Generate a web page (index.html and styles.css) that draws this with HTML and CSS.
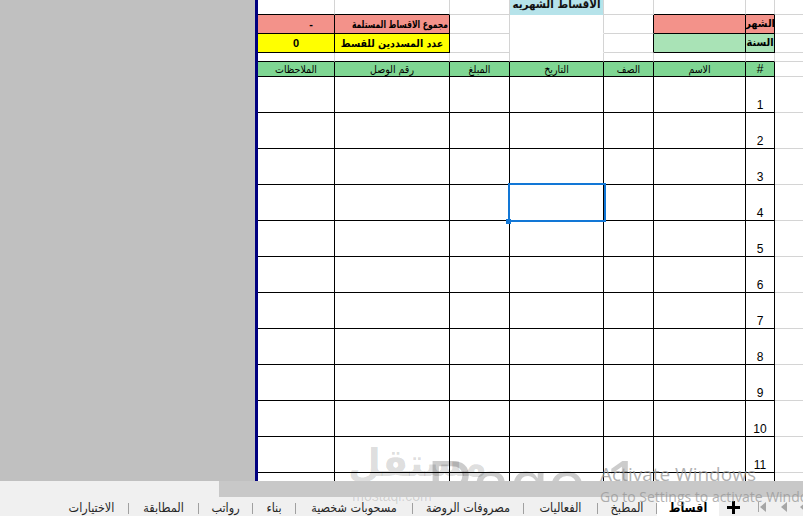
FILE: index.html
```html
<!DOCTYPE html>
<html lang="ar">
<head>
<meta charset="utf-8">
<title>اقساط</title>
<link rel="stylesheet" href="styles.css">
</head>
<body>
<div class="app">
  <div class="main">
    <div class="pane"></div>
    <div class="sheet">
      <table class="grid">
        <colgroup>
          <col class="c1"><col class="c2"><col class="c3"><col class="c4"><col class="c5"><col class="c6"><col class="c7"><col class="c8">
        </colgroup>
        <tr class="r0">
          <td class="bb"></td>
          <td class="bb"></td>
          <td></td>
          <td class="title nob"><div class="title-in">الاقساط الشهريه</div></td>
          <td></td>
          <td class="bb"></td>
          <td class="bb"></td>
          <td></td>
        </tr>
        <tr class="r1">
          <td class="box pink val dash">-</td>
          <td class="box pink lbl"><span class="squeeze">مجموع الاقساط المستلمة</span></td>
          <td></td>
          <td class="nob"></td>
          <td class="br"></td>
          <td class="box pink"></td>
          <td class="box pink side">الشهر</td>
          <td></td>
        </tr>
        <tr class="r2">
          <td class="box yellow val">0</td>
          <td class="box yellow lbl mid">عدد المسددين للقسط</td>
          <td></td>
          <td class="nob"></td>
          <td class="br"></td>
          <td class="box lgreen"></td>
          <td class="box lgreen side">السنة</td>
          <td></td>
        </tr>
        <tr class="r3">
          <td class="bb"></td><td class="bb"></td><td class="bb"></td><td class="bb"></td><td class="bb"></td><td class="bb"></td><td class="bb"></td><td></td>
        </tr>
        <tr class="r4">
          <td class="box head">الملاحظات</td>
          <td class="box head">رقم الوصل</td>
          <td class="box head">المبلغ</td>
          <td class="box head">التاريخ</td>
          <td class="box head">الصف</td>
          <td class="box head">الاسم</td>
          <td class="box head hash">#</td>
          <td></td>
        </tr>
        <tr class="rd"><td class="box"></td><td class="box"></td><td class="box"></td><td class="box"></td><td class="box"></td><td class="box"></td><td class="box num">1</td><td></td></tr>
        <tr class="rd"><td class="box"></td><td class="box"></td><td class="box"></td><td class="box"></td><td class="box"></td><td class="box"></td><td class="box num">2</td><td></td></tr>
        <tr class="rd"><td class="box"></td><td class="box"></td><td class="box"></td><td class="box"></td><td class="box"></td><td class="box"></td><td class="box num">3</td><td></td></tr>
        <tr class="rd"><td class="box"></td><td class="box"></td><td class="box"></td><td class="box selcell"><div class="sel"></div><div class="handle"></div></td><td class="box"></td><td class="box"></td><td class="box num">4</td><td></td></tr>
        <tr class="rd"><td class="box"></td><td class="box"></td><td class="box"></td><td class="box"></td><td class="box"></td><td class="box"></td><td class="box num">5</td><td></td></tr>
        <tr class="rd"><td class="box"></td><td class="box"></td><td class="box"></td><td class="box"></td><td class="box"></td><td class="box"></td><td class="box num">6</td><td></td></tr>
        <tr class="rd"><td class="box"></td><td class="box"></td><td class="box"></td><td class="box"></td><td class="box"></td><td class="box"></td><td class="box num">7</td><td></td></tr>
        <tr class="rd"><td class="box"></td><td class="box"></td><td class="box"></td><td class="box"></td><td class="box"></td><td class="box"></td><td class="box num">8</td><td></td></tr>
        <tr class="rd"><td class="box"></td><td class="box"></td><td class="box"></td><td class="box"></td><td class="box"></td><td class="box"></td><td class="box num">9</td><td></td></tr>
        <tr class="rd"><td class="box"></td><td class="box"></td><td class="box"></td><td class="box"></td><td class="box"></td><td class="box"></td><td class="box num">10</td><td></td></tr>
        <tr class="rd"><td class="box"></td><td class="box"></td><td class="box"></td><td class="box"></td><td class="box"></td><td class="box"></td><td class="box num">11</td><td></td></tr>
        <tr class="rd"><td class="box"></td><td class="box"></td><td class="box"></td><td class="box"></td><td class="box"></td><td class="box"></td><td class="box num">12</td><td></td></tr>
      </table>
      <div class="page-mark"><div class="page-text">Page 1</div></div>
    </div>
  </div>
  <div class="hscroll"><div class="hs-left"></div><div class="hs-bar"></div></div>
  <div class="tabs">
    <div class="tab-spacer"></div>
    <div class="tab w73">الاختيارات</div><span class="sep"></span>
    <div class="tab w69">المطابقة</div><span class="sep"></span>
    <div class="tab w53">رواتب</div><span class="sep"></span>
    <div class="tab w42">بناء</div><span class="sep"></span>
    <div class="tab w116">مسحوبات شخصية</div><span class="sep"></span>
    <div class="tab w110">مصروفات الروضة</div><span class="sep"></span>
    <div class="tab w73">الفعاليات</div><span class="sep"></span>
    <div class="tab w58">المطبخ</div><span class="sep"></span>
    <div class="tab active">اقساط</div>
    <div class="plus">
      <svg width="13" height="13" viewBox="0 0 13 13"><rect x="5" y="0" width="3" height="13" fill="#000"/><rect x="0" y="5" width="13" height="3" fill="#000"/></svg>
    </div>
    <div class="nav">
      <svg width="58" height="12" viewBox="0 0 58 12">
        <rect x="12" y="1" width="1" height="10" fill="#a6a6a6"/>
        <polygon points="14,6 20,1 20,11" fill="#a6a6a6"/>
        <polygon points="35,6 41,1 41,11" fill="#a6a6a6"/>
        <polygon points="54,6 58,2.5 58,9.5" fill="#a6a6a6"/>
      </svg>
    </div>
  </div>
  <div class="logo-mark">
    <div class="logo-ar">مستقل</div>
    <div class="logo-en">mostaql.com</div>
  </div>
  <div class="activate">
    <div class="act1">Activate Windows</div>
    <div class="act2">Go to Settings to activate Windows.</div>
  </div>
</div>
</body>
</html>
```
FILE: styles.css
```css
* { box-sizing: border-box; }
html, body { margin: 0; padding: 0; }
body {
  width: 803px;
  height: 516px;
  overflow: hidden;
  background: #f0f0f0;
  font-family: "Liberation Sans", "DejaVu Sans", sans-serif;
}
.app { position: relative; width: 803px; height: 516px; overflow: hidden; }

.main { display: flex; height: 481px; }
.pane { width: 258px; flex: none; background: #c0c0c0; border-right: 3px solid #000080; }
.sheet { flex: 1; position: relative; overflow: hidden; background: #fff; }

.grid { border-collapse: separate; border-spacing: 0; table-layout: fixed; width: 557px; }
.c1 { width: 77px; } .c2 { width: 115px; } .c3 { width: 60px; } .c4 { width: 94px; }
.c5 { width: 50px; } .c6 { width: 92px; } .c7 { width: 29px; } .c8 { width: 40px; }

.grid td {
  padding: 0;
  border-right: 1px solid #d4d4d4;
  border-bottom: 1px solid #d4d4d4;
  white-space: nowrap;
  overflow: hidden;
  font-size: 11px;
  line-height: 12px;
  color: #000;
}
.r0 td { height: 15px; }
.r1 td, .r2 td { height: 19px; }
.r3 td { height: 9px; }
.r4 td { height: 15px; }
.rd td { height: 36px; }

.grid td.bb { border-bottom-color: #000; }
.grid td.br { border-right-color: #000; }
.grid td.nob { border-bottom-color: transparent; }
.grid td.box { border-right-color: #000; border-bottom-color: #000; }

.pink { background: #f3928a; }
.yellow { background: #ffff00; }
.lgreen { background: #a9e3b6; }

.title { background: #b6e3ea; vertical-align: top; }
.title-in {
  height: 14px;
  overflow: hidden;
  direction: rtl;
  font-family: "DejaVu Sans Condensed", "DejaVu Sans", sans-serif;
  font-stretch: condensed;
  font-weight: bold;
  font-size: 11.5px;
  line-height: 8px;
  text-align: center;
  color: #111;
}

.val { font-weight: bold; text-align: center; font-size: 12px; }
.grid td.dash { text-align: right; padding-right: 21px; }
.lbl {
  direction: rtl;
  font-family: "DejaVu Sans Condensed", "DejaVu Sans", sans-serif;
  font-stretch: condensed;
  font-weight: bold;
  text-align: right;
}
.grid td.lbl { padding-right: 2px; font-size: 10.5px; }
.grid td.lbl.mid { text-align: center; padding-right: 0; }
.squeeze { display: inline-block; transform: scaleX(0.8); transform-origin: right center; }
.side {
  direction: rtl;
  font-family: "DejaVu Sans Condensed", "DejaVu Sans", sans-serif;
  font-stretch: condensed;
  font-weight: bold;
  text-align: center;
}
.grid td.side { font-size: 11px; }

.head {
  direction: rtl;
  font-family: "DejaVu Sans Condensed", "DejaVu Sans", sans-serif;
  font-stretch: condensed;
  background: #7fd693;
  text-align: center;
  color: #2a2a1a;
  vertical-align: middle;
}
.grid td.head { font-size: 10.5px; }
.grid td.hash { font-family: "Liberation Sans", sans-serif; font-size: 12px; color: #000; }

.grid td.num {
  text-align: center;
  vertical-align: bottom;
  font-size: 12px;
  line-height: 12px;
  padding-bottom: 1px;
}

.grid td.selcell { position: relative; overflow: visible; }
.sel {
  position: absolute;
  left: -2px;
  top: -2px;
  width: 98px;
  height: 39px;
  border: 2px solid #1277d6;
}
.handle {
  position: absolute;
  left: -4px;
  top: 34px;
  width: 5px;
  height: 5px;
  background: #1277d6;
}

.page-mark {
  position: absolute;
  left: 169px;
  top: 450px;
  height: 31px;
  overflow: hidden;
  pointer-events: none;
}
.page-text {
  font-family: "Liberation Sans", sans-serif;
  font-size: 68px;
  line-height: 68px;
  color: rgba(0, 0, 0, 0.2);
  white-space: nowrap;
}

.hscroll { display: flex; height: 16px; position: relative; z-index: 3; }
.hs-left { width: 219px; background: #f0f0f0; }
.hs-bar { flex: 1; background: #c8c8c8; }

.tabs { display: flex; height: 19px; background: #f0f0f0; }
.tab-spacer { width: 55px; flex: none; }
.tab {
  flex: none;
  height: 19px;
  line-height: 19px;
  padding-top: 1px;
  text-align: center;
  direction: rtl;
  font-family: "DejaVu Sans Condensed", "DejaVu Sans", sans-serif;
  font-stretch: condensed;
  font-size: 12.5px;
  color: #262626;
  white-space: nowrap;
  overflow: hidden;
}
.w42 { width: 42px; } .w53 { width: 53px; } .w58 { width: 58px; } .w69 { width: 69px; }
.w73 { width: 73px; } .w110 { width: 110px; } .w116 { width: 116px; }
.tab.active { width: 62px; background: #fff; font-weight: bold; color: #000; }
.sep { flex: none; width: 1px; height: 11px; background: #a0a0a0; align-self: flex-end; margin-bottom: 2px; }
.plus { flex: none; width: 27px; display: flex; align-items: center; justify-content: center; padding-top: 1px; }
.plus svg { display: block; margin-left: 2px; }
.nav { flex: none; width: 58px; display: flex; align-items: center; }
.nav svg { display: block; }

.logo-mark {
  position: absolute;
  left: 348px;
  top: 440px;
  z-index: 2;
  width: 88px;
  text-align: center;
  color: rgba(0, 0, 0, 0.15);
  pointer-events: none;
}
.logo-ar { font-family: "DejaVu Sans", sans-serif; font-weight: bold; font-size: 38px; line-height: 46px; }
.logo-en { font-family: "Liberation Sans", sans-serif; font-size: 14px; line-height: 16px; margin-top: 2px; }

.activate {
  position: absolute;
  left: 600px;
  top: 462px;
  z-index: 5;
  color: rgba(150, 150, 150, 0.75);
  font-family: "Open Sans", "Noto Sans", sans-serif;
  white-space: nowrap;
  pointer-events: none;
}
.act1 { font-size: 19px; line-height: 25px; }
.act2 { font-size: 14px; line-height: 19px; }
```
